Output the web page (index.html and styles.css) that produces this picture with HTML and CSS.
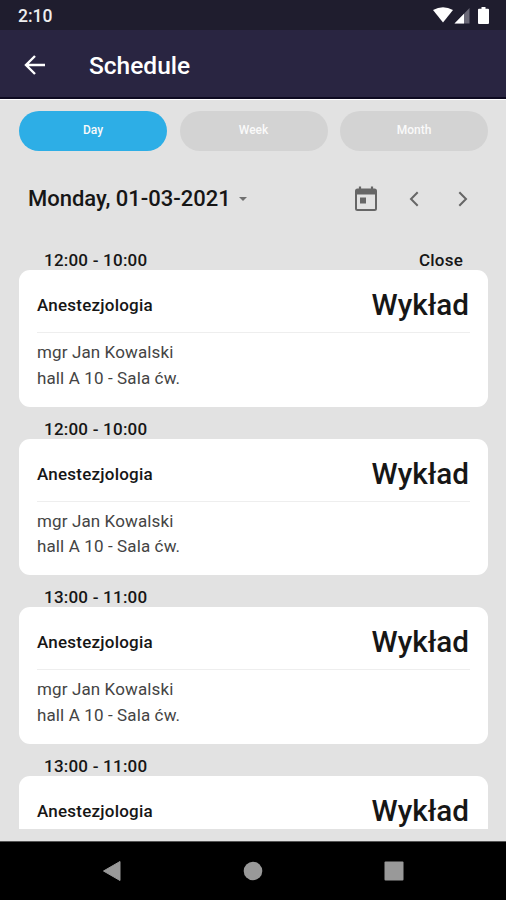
FILE: index.html
```html
<!DOCTYPE html>
<html lang="en">
<head>
  <meta charset="UTF-8" />
  <meta name="viewport" content="width=device-width, initial-scale=1.0"/>
  <title>Schedule</title>
  <link rel="stylesheet" href="styles.css">
</head>
<body>
  <!-- Status bar -->
  <div class="status-bar">
    <span class="clock">2:10</span>
    <svg class="status-icons" width="57" height="18" viewBox="0 0 57 18">
      <path d="M0 4Q10 -1.500 20 4L10 16.500Z" fill="#fff"/>
      <path d="M36.500 2V17.500H21.500Z" fill="#6b6977"/>
      <path d="M31 7.700V17.500H21.500Z" fill="#fff"/>
      <path d="M48.500 1h4v1.700h2.500q1 0 1 1V17q0 1-1 1h-9q-1 0-1-1V3.700q0-1 1-1h2.500Z" fill="#fff"/>
    </svg>
  </div>

  <header class="app-bar">
    <svg class="back" width="22" height="22" viewBox="0 0 22 22">
      <path d="M21 11H2.500M11 2L2 11l9 9" fill="none" stroke="#fff" stroke-width="2.400"/>
    </svg>
    <h1>Schedule</h1>
  </header>

  <main>
    <div class="tabs">
      <button class="tab active">Day</button>
      <button class="tab">Week</button>
      <button class="tab">Month</button>
    </div>

    <!-- Date picker row -->
    <div class="date-row">
      <span class="date">Monday, 01-03-2021</span>
      <span class="caret"></span>
      <svg class="calendar" width="24" height="26" viewBox="0 0 24 26">
        <path d="M6 0.500v4M18 0.500v4" stroke="#666" stroke-width="2.200"/>
        <rect x="2" y="3.500" width="20" height="20.500" rx="1.500" fill="none" stroke="#666" stroke-width="2"/>
        <path d="M2 3.500h20v5H2z" fill="#666"/>
        <path d="M6 11.500h6v6H6z" fill="#666"/>
      </svg>
      <svg class="prev" width="10" height="16" viewBox="0 0 10 16">
        <path d="M8.700 1.200L2 8l6.700 6.800" fill="none" stroke="#666" stroke-width="2"/>
      </svg>
      <svg class="next" width="10" height="16" viewBox="0 0 10 16">
        <path d="M1.300 1.200L8 8l-6.700 6.800" fill="none" stroke="#666" stroke-width="2"/>
      </svg>
    </div>

    <div class="list">
      <div class="lesson">
        <div class="hours"><span>12:00 - 10:00</span><span class="close">Close</span></div>
        <div class="card">
          <div class="card-head"><span class="subject">Anestezjologia</span><span class="type">Wykład</span></div>
          <p>mgr Jan Kowalski</p>
          <p>hall A 10 - Sala ćw.</p>
        </div>
      </div>
      <div class="lesson">
        <div class="hours"><span>12:00 - 10:00</span></div>
        <div class="card">
          <div class="card-head"><span class="subject">Anestezjologia</span><span class="type">Wykład</span></div>
          <p>mgr Jan Kowalski</p>
          <p>hall A 10 - Sala ćw.</p>
        </div>
      </div>
      <div class="lesson">
        <div class="hours"><span>13:00 - 11:00</span></div>
        <div class="card">
          <div class="card-head"><span class="subject">Anestezjologia</span><span class="type">Wykład</span></div>
          <p>mgr Jan Kowalski</p>
          <p>hall A 10 - Sala ćw.</p>
        </div>
      </div>
      <div class="lesson">
        <div class="hours"><span>13:00 - 11:00</span></div>
        <div class="card">
          <div class="card-head"><span class="subject">Anestezjologia</span><span class="type">Wykład</span></div>
        </div>
      </div>
    </div>
  </main>

  <!-- Android navigation -->
  <nav class="nav-bar">
    <svg width="20" height="22" viewBox="0 0 20 22"><path d="M18 1.500v19L1.500 11z" fill="#999" stroke="#999" stroke-linejoin="round"/></svg>
    <svg width="20" height="20" viewBox="0 0 20 20"><circle cx="10" cy="10" r="9.300" fill="#999"/></svg>
    <svg width="20" height="20" viewBox="0 0 20 20"><rect x=".5" y=".5" width="19" height="19" rx="1" fill="#999"/></svg>
  </nav>
</body>
</html>
```

FILE: styles.css
```css
* {
  box-sizing: border-box;
}

body {
  margin: 0;
  height: 900px;
  display: flex;
  flex-direction: column;
  overflow: hidden;
  background-color: #e2e2e2;
  color: #161616;
  font-family: Roboto, sans-serif;
}

.status-bar {
  height: 30px;
  padding: 0 16px 0 18px;
  display: flex;
  align-items: center;
  justify-content: space-between;
  background-color: #1f1d2e;
}

.clock {
  padding-top: 2px;
  color: #eee;
  font-size: 17.5px;
  font-weight: 500;
}

.app-bar {
  height: 69px;
  padding: 2px 24px 0;
  display: flex;
  align-items: center;
  gap: 43px;
  background-color: #292541;
  border-bottom: 2px solid #0d0a20;
}

h1 {
  margin: 2px 0 0;
  color: #fff;
  font-size: 24.5px;
  font-weight: 500;
}

main {
  flex: 1;
  min-height: 0;
  padding: 11px 18px 12px 19px;
  display: flex;
  flex-direction: column;
  border-top: 1px solid #fff;
}

.tabs {
  display: grid;
  grid-template-columns: repeat(3, 1fr);
  gap: 12.5px;
}

.tab {
  height: 40px;
  padding: 0 0 2px;
  border: none;
  border-radius: 20px;
  background-color: #d3d3d3;
  color: #fafafa;
  font-family: inherit;
  font-size: 12px;
  font-weight: 500;
}

.tab.active {
  background-color: #2daee6;
}

.date-row {
  height: 87px;
  padding: 8px 20px 0 9px;
  display: flex;
  align-items: center;
}

.date {
  font-size: 22px;
  font-weight: 500;
}

.caret {
  margin-left: 8px;
  border: 4.5px solid transparent;
  border-top-color: #707070;
  border-bottom: none;
}

.calendar {
  margin-left: auto;
}

.prev {
  margin-left: 31px;
}

.next {
  margin-left: 39px;
}

.list {
  flex: 1;
  min-height: 0;
  overflow: hidden;
}

.lesson {
  height: 168.6px;
  display: flex;
  flex-direction: column;
}

.hours {
  height: 32px;
  padding: 12px 25px 0;
  display: flex;
  justify-content: space-between;
  font-size: 17px;
  font-weight: 500;
  letter-spacing: 0.22px;
  line-height: 20px;
}

.card {
  flex: 1;
  padding: 7px 18px 0;
  border-radius: 11px;
  background-color: #fff;
}

.card-head {
  height: 56px;
  margin-bottom: 7px;
  display: flex;
  align-items: center;
  justify-content: space-between;
  border-bottom: 1px solid #eee;
}

.subject {
  padding-top: 1px;
  font-size: 17px;
  font-weight: 500;
  letter-spacing: 0.22px;
}

.type {
  padding-right: 1px;
  font-size: 29.7px;
  font-weight: 500;
}

.card p {
  margin: 0;
  color: #444;
  font-size: 17px;
  letter-spacing: 0.12px;
  line-height: 25.7px;
}

.nav-bar {
  height: 59px;
  padding: 0 102px;
  display: flex;
  align-items: center;
  justify-content: space-between;
  background-color: #000;
  border-top: 1px solid #555;
}
```
